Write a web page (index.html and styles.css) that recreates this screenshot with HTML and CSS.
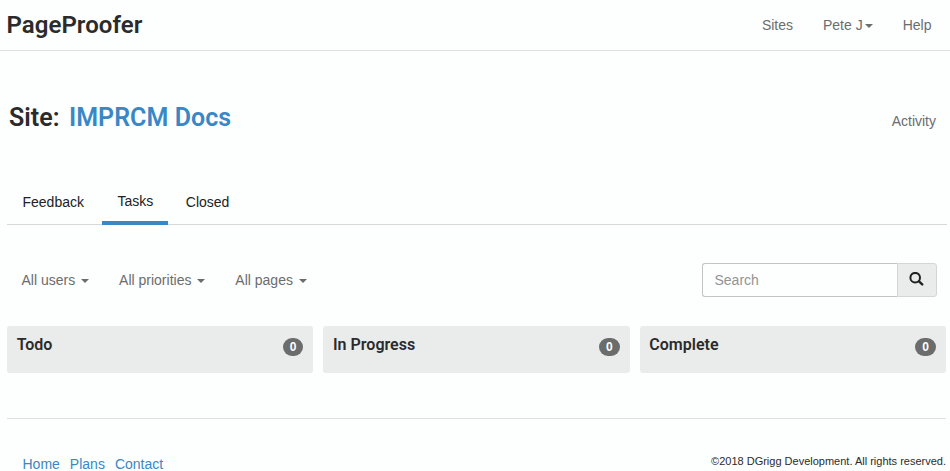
FILE: index.html
```
<!DOCTYPE html>
<html lang="en">
<head>
<meta charset="utf-8">
<title>PageProofer</title>
<link rel="stylesheet" href="styles.css">
</head>
<body>
<header class="topbar">
  <a class="brand">PageProofer</a>
  <nav class="topnav">
    <a>Sites</a>
    <a>Pete J<span class="caret"></span></a>
    <a>Help</a>
  </nav>
</header>
<main class="page">
  <div class="heading">
    <h1>Site: <a>IMPRCM Docs</a></h1>
    <a class="activity">Activity</a>
  </div>
  <nav class="tabs">
    <a>Feedback</a>
    <a class="active">Tasks</a>
    <a>Closed</a>
  </nav>
  <div class="filters">
    <a>All users <span class="caret"></span></a>
    <a>All priorities <span class="caret"></span></a>
    <a>All pages <span class="caret"></span></a>
    <form class="search">
      <input type="text" placeholder="Search">
      <button type="button" aria-label="Search">
        <svg width="15" height="14" viewBox="0 0 15 14"><circle cx="6.2" cy="5.7" r="4.8" fill="none" stroke="#222" stroke-width="2"/><path d="M10 9.4l3.2 3" stroke="#222" stroke-width="2.4" stroke-linecap="round"/></svg>
      </button>
    </form>
  </div>
  <div class="board">
    <section class="column"><h2>Todo</h2><span class="badge">0</span></section>
    <section class="column"><h2>In Progress</h2><span class="badge">0</span></section>
    <section class="column"><h2>Complete</h2><span class="badge">0</span></section>
  </div>
  <footer class="footer">
    <nav><a>Home</a><a>Plans</a><a>Contact</a></nav>
    <small>©2018 DGrigg Development. All rights reserved.</small>
  </footer>
</main>
</body>
</html>
```
FILE: styles.css
```
* { box-sizing: border-box; }
html { overflow: hidden; }
body {
  margin: 0;
  background: #fdfefe;
  color: #2b2b2b;
  font: 14px/20px "Liberation Sans", Arial, sans-serif;
}
h1, h2 { margin: 0; font-family: Roboto, sans-serif; }
.topbar {
  display: flex;
  justify-content: space-between;
  height: 51px;
  padding: 15px 18.5px 0 6.5px;
  border-bottom: 1px solid #dfe2e2;
}
.brand { font: 600 24px/20px Roboto, sans-serif; letter-spacing: 0.05px; }
.topnav { display: flex; gap: 30px; color: #6b6d6d; }
.caret {
  display: inline-block;
  vertical-align: middle;
  margin-left: 2px;
  border-top: 4px solid;
  border-left: 4px solid transparent;
  border-right: 4px solid transparent;
}
.page { margin: 0 4px 0 7px; }
.heading {
  display: flex;
  justify-content: space-between;
  padding: 51px 10px 0 2px;
  height: 128px;
}
.heading h1 { font-size: 25px; line-height: 32px; font-weight: 600; letter-spacing: 0.05px; }
.heading h1 a { color: #3a87c5; margin-left: 3px; }
.activity { color: #6b6d6d; margin-top: 9px; }
.tabs {
  display: flex;
  height: 46px;
  gap: 2px;
  margin-right: -1px;
  border-bottom: 1px solid #d6d9d9;
  color: #222;
}
.tabs a { padding: 13px 16.5px 0 15.5px; height: 46px; }
.tabs .active { padding: 12px 15px 0; border-bottom: 4px solid #3a87c5; }
.filters {
  display: flex;
  align-items: center;
  gap: 30px;
  margin: 38px 9px 0 14.5px;
  height: 34px;
  color: #6b6d6d;
}
.search { display: flex; width: 235px; height: 34px; margin-left: auto; }
.search input {
  width: 195px;
  padding: 6px 12px 6px 11.5px;
  border: 1px solid #c2c5c5;
  border-right: 0;
  border-radius: 3px 0 0 3px;
  background: #fdfefe;
  font: inherit;
}
.search input::placeholder { color: #929494; }
.search button {
  width: 40px;
  padding: 0;
  border: 1px solid #d3d6d6;
  border-radius: 0 3px 3px 0;
  background: #eaebeb;
}
.search svg { display: block; margin: -2px 0 0 11px; }
.board {
  display: grid;
  grid-template-columns: repeat(3, 1fr);
  gap: 10px;
  margin-top: 29px;
}
.column {
  display: flex;
  justify-content: space-between;
  align-items: flex-start;
  height: 47px;
  padding: 10px 10px 10px 9.7px;
  border-radius: 3px;
  background: #eaebeb;
}
.column h2 { font-size: 16px; line-height: 18px; font-weight: 600; }
.badge {
  height: 18px;
  margin-top: 2px;
  padding: 0 7px;
  border-radius: 10px;
  background: #6b6d6d;
  color: #fff;
  font-size: 12px;
  font-weight: bold;
  line-height: 18px;
}
.footer {
  display: flex;
  justify-content: space-between;
  margin-top: 45px;
  padding: 35px 0 0 15.5px;
  border-top: 1px solid #dfe2e2;
}
.footer nav { display: flex; gap: 10px; color: #3a87c5; }
.footer small { font-size: 11px; line-height: 15px; }
```
